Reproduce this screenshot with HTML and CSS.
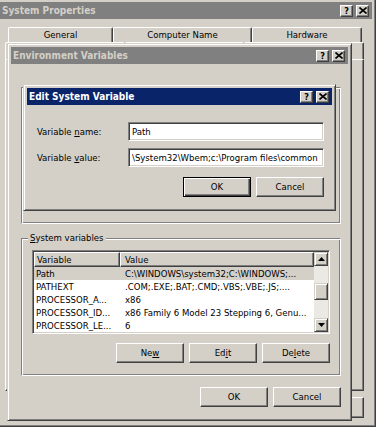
FILE: index.html
```html
<!DOCTYPE html>
<html lang="en">
    <head>
        <meta charset="UTF-8" />
        <meta name="viewport" content="width=device-width, initial-scale=1.0" />
        <title>Edit System Variable</title>

        <link rel="stylesheet" href="styles.css">
    </head>

    <body>
        <div class="desktop">

            <!-- back window -->
            <div class="window sysprops">
                <div class="titlebar inactive">
                    <span class="title">System Properties</span>
                    <div class="caption">
                        <span class="cap-btn">?</span>
                        <span class="cap-btn">
                            <svg viewBox="0 0 8 7" width="8" height="7"><path d="M0.5 0.5L7.5 6.5M7.5 0.5L0.5 6.5" stroke="#000" stroke-width="1.6" /></svg>
                        </span>
                    </div>
                </div>

                <div class="tabs">
                    <div class="tab-row back">
                        <span class="tab tab-general">General</span>
                        <span class="tab tab-computer">Computer Name</span>
                        <span class="tab tab-hardware">Hardware</span>
                    </div>
                    <!-- second tab row sits under the Environment Variables window -->
                    <div class="tab-row front">
                        <span class="tab"></span>
                        <span class="tab"></span>
                        <span class="tab"></span>
                    </div>
                    <div class="tab-page"></div>
                </div>

                <div class="button-row sys-buttons">
                    <span class="btn wide"></span>
                    <span class="btn wide"></span>
                    <span class="btn wide"></span>
                </div>
            </div>

            <!-- middle window -->
            <div class="window envvars">
                <div class="titlebar inactive">
                    <span class="title">Environment Variables</span>
                    <div class="caption">
                        <span class="cap-btn">?</span>
                        <span class="cap-btn">
                            <svg viewBox="0 0 8 7" width="8" height="7"><path d="M0.5 0.5L7.5 6.5M7.5 0.5L0.5 6.5" stroke="#000" stroke-width="1.6" /></svg>
                        </span>
                    </div>
                </div>

                <div class="env-body">
                    <!-- user variables, covered by the edit dialog -->
                    <div class="group user-group">
                        <div class="listview user-list"></div>
                        <div class="button-row">
                            <span class="btn"></span>
                            <span class="btn"></span>
                            <span class="btn"></span>
                        </div>
                    </div>

                    <fieldset class="group sys-group">
                        <legend><u>S</u>ystem variables</legend>

                        <div class="listview">
                            <div class="list-body">
                                <div class="list-head">
                                    <span class="head-cell col-name">Variable</span>
                                    <span class="head-cell col-value">Value</span>
                                </div>
                                <div class="row selected">
                                    <span class="col-name">Path</span>
                                    <span class="col-value">C:\WINDOWS\system32;C:\WINDOWS;...</span>
                                </div>
                                <div class="row">
                                    <span class="col-name">PATHEXT</span>
                                    <span class="col-value">.COM;.EXE;.BAT;.CMD;.VBS;.VBE;.JS;....</span>
                                </div>
                                <div class="row">
                                    <span class="col-name">PROCESSOR_A...</span>
                                    <span class="col-value">x86</span>
                                </div>
                                <div class="row">
                                    <span class="col-name">PROCESSOR_ID...</span>
                                    <span class="col-value">x86 Family 6 Model 23 Stepping 6, Genu...</span>
                                </div>
                                <div class="row">
                                    <span class="col-name">PROCESSOR_LE...</span>
                                    <span class="col-value">6</span>
                                </div>
                            </div>

                            <div class="scrollbar">
                                <span class="sb-btn">
                                    <svg viewBox="0 0 7 4" width="7" height="4"><path d="M3.5 0L7 4H0z" /></svg>
                                </span>
                                <span class="sb-track short"></span>
                                <span class="sb-thumb"></span>
                                <span class="sb-track"></span>
                                <span class="sb-btn">
                                    <svg viewBox="0 0 7 4" width="7" height="4"><path d="M0 0H7L3.5 4z" /></svg>
                                </span>
                            </div>
                        </div>

                        <div class="button-row">
                            <button class="btn">Ne<u>w</u></button>
                            <button class="btn">Ed<u>i</u>t</button>
                            <button class="btn">De<u>l</u>ete</button>
                        </div>
                    </fieldset>

                    <div class="button-row env-buttons">
                        <button class="btn">OK</button>
                        <button class="btn">Cancel</button>
                    </div>
                </div>
            </div>

            <!-- front window -->
            <div class="window editvar">
                <div class="titlebar">
                    <span class="title">Edit System Variable</span>
                    <div class="caption">
                        <span class="cap-btn">?</span>
                        <span class="cap-btn">
                            <svg viewBox="0 0 8 7" width="8" height="7"><path d="M0.5 0.5L7.5 6.5M7.5 0.5L0.5 6.5" stroke="#000" stroke-width="1.6" /></svg>
                        </span>
                    </div>
                </div>

                <form class="edit-body">
                    <div class="field-row">
                        <label for="var-name">Variable <u>n</u>ame:</label>
                        <input class="field" id="var-name" type="text" value="Path" />
                    </div>
                    <div class="field-row">
                        <label for="var-value">Variable <u>v</u>alue:</label>
                        <input class="field" id="var-value" type="text" value="\System32\Wbem;c:\Program files\common" />
                    </div>
                    <div class="button-row edit-buttons">
                        <button class="btn default" type="button">OK</button>
                        <button class="btn" type="button">Cancel</button>
                    </div>
                </form>
            </div>

        </div>
    </body>
</html>
```

FILE: styles.css
```css
* {
    margin: 0;
    padding: 0;
    box-sizing: border-box;
}

body {
    background-color: #fff;
    color: #000;
    font-family: "DejaVu Sans Condensed", "DejaVu Sans", sans-serif;
    font-stretch: semi-condensed;
    font-size: 9.5px;
    line-height: 12px;
}

.desktop {
    position: relative;
    width: 378px;
    height: 429px;
    overflow: hidden;
}

/* classic window frame */
.window {
    position: absolute;
    display: flex;
    flex-direction: column;
    padding: 3px;
    background-color: #d4d0c8;
    border: 1px solid;
    border-color: #d4d0c8 #404040 #404040 #d4d0c8;
    box-shadow: inset 1px 1px #fff, inset -1px -1px #808080;
}

.sysprops {
    left: -4px;
    top: -2px;
    width: 380px;
    height: 429px;
}

.envvars {
    left: 7px;
    top: 43px;
    width: 345px;
    height: 378px;
}

.editvar {
    left: 23px;
    top: 84px;
    width: 313px;
    height: 127px;
}

.titlebar {
    display: flex;
    align-items: center;
    justify-content: space-between;
    flex: none;
    height: 17px;
    padding: 0 3px 0 2px;
    background-color: #0a246a;
    color: #fff;
}

.titlebar.inactive {
    background-color: #808080;
    color: #d4d0c8;
}

.title {
    font-weight: bold;
    font-size: 10px;
}

.caption {
    display: flex;
    gap: 3px;
}

.cap-btn {
    display: flex;
    align-items: center;
    justify-content: center;
    width: 13px;
    height: 12px;
    background-color: #d4d0c8;
    color: #000;
    border: 1px solid;
    border-color: #fff #404040 #404040 #fff;
    box-shadow: inset -1px -1px #808080;
    font-weight: bold;
    font-size: 9px;
    line-height: 10px;
}

/* buttons */
.button-row {
    display: flex;
    justify-content: flex-end;
    gap: 5px;
}

.btn {
    display: flex;
    align-items: center;
    justify-content: center;
    width: 68px;
    height: 20px;
    background-color: #d4d0c8;
    color: #000;
    font: inherit;
    border: 1px solid;
    border-color: #fff #404040 #404040 #fff;
    box-shadow: inset -1px -1px #808080;
}

.btn.default {
    border-color: #000;
    box-shadow: inset 1px 1px #fff, inset -1px -1px #404040, inset -2px -2px #808080;
}

.btn.wide {
    width: 75px;
    height: 21px;
}

/* tabs of System Properties */
.tabs {
    display: flex;
    flex-direction: column;
    margin-top: 8px;
    padding: 0 8px 0 5px;
}

.tab-row {
    display: flex;
}

.tab-row.back {
    height: 15px;
    padding-left: 3px;
}

.tab-row.front {
    height: 17px;
}

.tab {
    display: flex;
    align-items: center;
    justify-content: center;
    flex: 1;
    border: 1px solid;
    border-bottom: none;
    border-color: #fff #404040 #404040 #fff;
    border-radius: 2px 2px 0 0;
    box-shadow: inset -1px 0 #808080;
}

.tab-general {
    flex: none;
    width: 105px;
}

.tab-computer {
    flex: none;
    width: 139px;
}

.tab-hardware {
    flex: none;
    width: 110px;
}

.tab-page {
    height: 332px;
    border: 1px solid;
    border-color: #fff #404040 #404040 #fff;
    box-shadow: inset -1px -1px #808080;
}

.sys-buttons {
    margin-top: 6px;
    padding-right: 8px;
    gap: 6px;
}

/* Environment Variables body */
.env-body {
    display: flex;
    flex-direction: column;
    padding: 0 7px 0 10px;
}

.group {
    border: 1px solid;
    border-color: #808080 #fff #fff #808080;
    box-shadow: inset 1px 1px #fff, inset -1px -1px #808080;
    padding: 10px 10px 12px;
}

.group legend {
    margin-left: -4px;
    padding: 0 2px;
    line-height: 12px;
    background-color: #d4d0c8;
}

.user-group {
    margin-top: 23px;
}

.user-list {
    height: 86px;
    margin-bottom: 9px;
}

.sys-group {
    margin-top: 8px;
    padding-top: 6px;
}

.sys-group .listview {
    margin-bottom: 9px;
}

.env-buttons {
    margin-top: 11px;
}

/* list view */
.listview {
    display: flex;
    height: 84px;
    padding: 1px;
    background-color: #fff;
    border: 1px solid;
    border-color: #808080 #fff #fff #808080;
    box-shadow: inset 1px 1px #404040, inset -1px -1px #d4d0c8;
}

.list-body {
    flex: 1;
    min-width: 0;
}

.list-head {
    display: flex;
    height: 15px;
}

.head-cell {
    display: flex;
    align-items: center;
    background-color: #d4d0c8;
    border: 1px solid;
    border-color: #fff #404040 #404040 #fff;
    box-shadow: inset -1px -1px #808080;
}

.row {
    display: flex;
    align-items: center;
    height: 13px;
    white-space: nowrap;
}

.row.selected {
    background-color: #d4d0c8;
}

.col-name {
    flex: none;
    width: 86px;
    padding-left: 2px;
    overflow: hidden;
}

.col-value {
    flex: 1;
    padding-left: 5px;
    overflow: hidden;
}

.head-cell.col-value {
    padding-left: 4px;
}

.scrollbar {
    display: flex;
    flex-direction: column;
    flex: none;
    width: 14px;
}

.sb-btn,
.sb-thumb {
    display: flex;
    align-items: center;
    justify-content: center;
    flex: none;
    height: 14px;
    background-color: #d4d0c8;
    border: 1px solid;
    border-color: #d4d0c8 #404040 #404040 #d4d0c8;
    box-shadow: inset 1px 1px #fff, inset -1px -1px #808080;
}

.sb-thumb {
    height: 17px;
}

.sb-track {
    flex: 1;
    background-color: #ebe9e4;
}

.sb-track.short {
    flex: none;
    height: 17px;
}

/* Edit System Variable body */
.edit-body {
    display: flex;
    flex-direction: column;
    gap: 7px;
    padding: 17px 8px 0 10px;
}

.field-row {
    display: flex;
    align-items: center;
}

.field-row label {
    flex: none;
    width: 91px;
}

.field {
    flex: 1;
    min-width: 0;
    height: 19px;
    padding: 0 3px;
    font: inherit;
    color: #000;
    background-color: #fff;
    border: 1px solid;
    border-color: #808080 #fff #fff #808080;
    box-shadow: inset 1px 1px #404040, inset -1px -1px #d4d0c8;
    outline: none;
}

.edit-buttons {
    margin-top: 3px;
}
```
